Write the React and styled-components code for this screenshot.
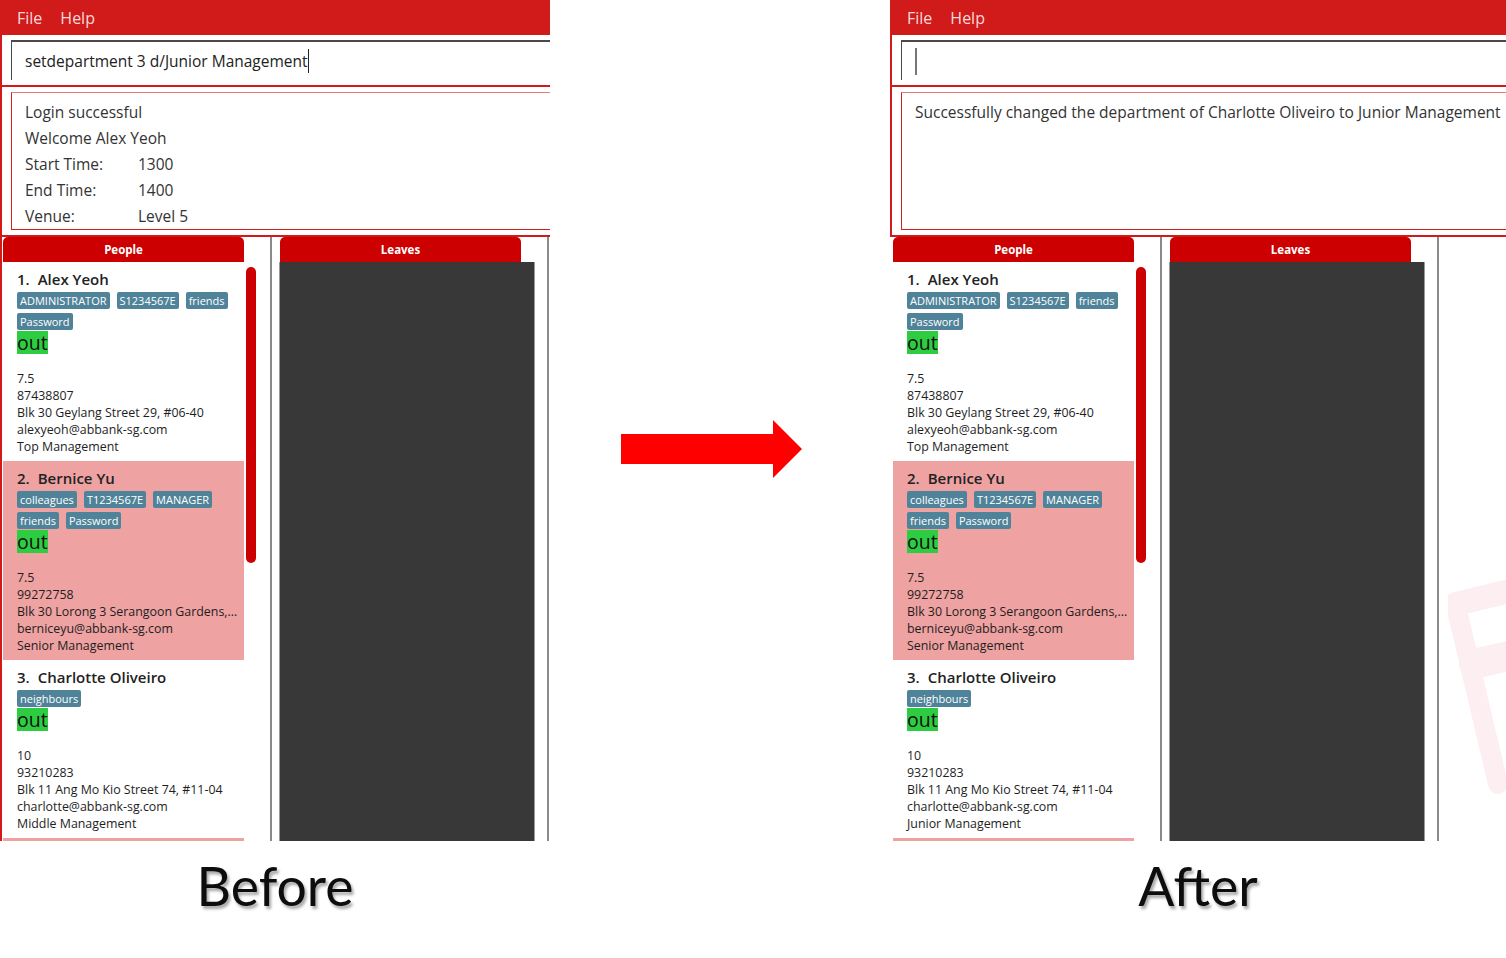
import React from "react";
import styled, { createGlobalStyle } from "styled-components";

const GlobalStyle = createGlobalStyle`
  * { box-sizing: border-box; }
  html, body { margin: 0; padding: 0; background: #ffffff; }
  body { font-family: "Open Sans", "Liberation Sans", sans-serif; }
`;

const RED = "#d11a1a";
const HEADER_RED = "#cc0000";

const Page = styled.div`
  width: 1506px;
  height: 958px;
  display: flex;
  overflow: hidden;
  background: #fff;
`;

const Column = styled.div`
  width: ${(p) => p.width}px;
  flex-shrink: 0;
  display: flex;
  flex-direction: column;
`;

const Screen = styled.div`
  position: relative;
  height: 841px;
  flex-shrink: 0;
  overflow: hidden;
  display: flex;
  flex-direction: column;
`;

const MenuBar = styled.div`
  height: 35px;
  flex-shrink: 0;
  background: ${RED};
  display: flex;
  align-items: center;
  gap: 18px;
  padding-left: 17px;
`;

const MenuItem = styled.span`
  color: #f7dada;
  font-size: 16px;
`;

const TopSection = styled.div`
  flex-shrink: 0;
  border-left: 2px solid ${RED};
`;

const CommandArea = styled.div`
  height: 52px;
  padding: 5px 0 0 9px;
  border-bottom: 2px solid ${RED};
`;

const CommandField = styled.div`
  height: 40px;
  border-top: 2px solid #4a4a4a;
  border-left: 1px solid #4a4a4a;
  display: flex;
  align-items: center;
  padding-left: 13px;
  font-size: 15.5px;
  color: #222;
  white-space: nowrap;
`;

const Caret = styled.span`
  display: inline-block;
  width: ${(p) => (p.idle ? 2 : 1)}px;
  height: ${(p) => (p.idle ? 27 : 24)}px;
  background: ${(p) => (p.idle ? "#777" : "#222")};
`;

const ResultArea = styled.div`
  height: 150px;
  padding: 5px 0 0 9px;
  border-bottom: 2px solid ${RED};
`;

const ResultBox = styled.div`
  height: 138px;
  border: 1px solid #d62020;
  border-top-color: #e77a7a;
  border-right: none;
  padding: 6px 13px;
  font-size: 15.5px;
  line-height: 26px;
  color: #333;
  white-space: nowrap;
`;

const ResultRow = styled.div`
  display: flex;
`;

const ResultLabel = styled.span`
  width: 113px;
`;

const Panels = styled.div`
  flex: 1;
  display: flex;
  border-left: 2px solid ${(p) => (p.edge ? RED : "transparent")};
  padding-left: 1px;
  min-height: 0;
`;

const PeopleColumn = styled.div`
  width: 253px;
  display: flex;
  flex-direction: column;
  overflow: hidden;
`;

const PanelHeader = styled.div`
  width: 241px;
  height: 25px;
  flex-shrink: 0;
  margin-left: ${(p) => p.offset || 0}px;
  background: ${HEADER_RED};
  border-radius: 5px 5px 0 0;
  color: #fff;
  font-size: 11.5px;
  font-weight: 700;
  display: flex;
  align-items: center;
  justify-content: center;
`;

const ListRow = styled.div`
  display: flex;
  flex-shrink: 0;
  align-items: flex-start;
`;

const CardList = styled.div`
  width: 241px;
`;

const ScrollThumb = styled.div`
  width: 10px;
  height: 296px;
  margin: 5px 0 0 2px;
  border-radius: 5px;
  background: ${HEADER_RED};
`;

const Card = styled.div`
  background: ${(p) => (p.shaded ? "#eea2a2" : "#ffffff")};
  padding: 6px 10px 6px 14px;
  color: #1e1e1e;
`;

const NextCard = styled.div`
  height: 12px;
  background: #eea2a2;
`;

const NameLine = styled.div`
  font-size: 15px;
  font-weight: 600;
  line-height: 22px;
  color: #222;
  white-space: nowrap;
`;

const Index = styled.span`
  margin-right: 8px;
`;

const TagRow = styled.div`
  display: flex;
  gap: 7px;
  margin-top: ${(p) => (p.first ? 2 : 4)}px;
`;

const Tag = styled.span`
  height: 17px;
  padding: 0 3px;
  border-radius: 2px;
  background: #4f8399;
  color: #fff;
  font-size: 11px;
  line-height: 17px;
  white-space: nowrap;
`;

const Status = styled.div`
  width: max-content;
  margin-top: 1px;
  height: 23px;
  background: #2ecc40;
  color: #111;
  font-size: 19.5px;
  line-height: 23px;
`;

const Details = styled.div`
  margin-top: 16px;
  font-size: 12.4px;
  line-height: 17px;
  white-space: nowrap;
`;

const Divider = styled.div`
  width: 2px;
  flex-shrink: 0;
  margin-left: ${(p) => p.offset}px;
  background: #8a8a8a;
`;

const LeavesColumn = styled.div`
  width: 256px;
  flex-shrink: 0;
  margin-left: 7px;
  display: flex;
  flex-direction: column;
`;

const LeavesBody = styled.div`
  flex: 1;
  background: #383838;
  border-left: 1px solid #9a9a9a;
  border-right: 1px solid #9a9a9a;
`;

const Watermark = styled.svg`
  position: absolute;
  left: 558px;
  top: 572px;
`;

const Caption = styled.div`
  margin-top: 10px;
  text-align: center;
  font-family: Lato, "Liberation Sans", sans-serif;
  font-size: 53.5px;
  line-height: 68px;
  color: #0d0d0d;
  text-shadow: 2px 3px 3px rgba(0, 0, 0, 0.35);
`;

const ArrowSlot = styled.div`
  width: 340px;
  flex-shrink: 0;
  padding: 420px 0 0 71px;
`;

const people = (department) => [
  {
    name: "Alex Yeoh",
    tags: [["ADMINISTRATOR", "S1234567E", "friends"], ["Password"]],
    details: [
      "7.5",
      "87438807",
      "Blk 30 Geylang Street 29, #06-40",
      "alexyeoh@abbank-sg.com",
      "Top Management",
    ],
  },
  {
    name: "Bernice Yu",
    tags: [["colleagues", "T1234567E", "MANAGER"], ["friends", "Password"]],
    details: [
      "7.5",
      "99272758",
      "Blk 30 Lorong 3 Serangoon Gardens,...",
      "berniceyu@abbank-sg.com",
      "Senior Management",
    ],
  },
  {
    name: "Charlotte Oliveiro",
    tags: [["neighbours"]],
    details: [
      "10",
      "93210283",
      "Blk 11 Ang Mo Kio Street 74, #11-04",
      "charlotte@abbank-sg.com",
      department,
    ],
  },
];

function PersonCard({ index, person }) {
  return (
    <Card shaded={index % 2 === 0}>
      <NameLine>
        <Index>{index}.</Index>
        {person.name}
      </NameLine>
      {person.tags.map((row, i) => (
        <TagRow key={i} first={i === 0}>
          {row.map((tag) => (
            <Tag key={tag}>{tag}</Tag>
          ))}
        </TagRow>
      ))}
      <Status>out</Status>
      <Details>
        {person.details.map((line, i) => (
          <div key={i}>{line}</div>
        ))}
      </Details>
    </Card>
  );
}

function AppWindow({ command, result, department, edge, watermark }) {
  return (
    <Screen>
      <MenuBar>
        <MenuItem>File</MenuItem>
        <MenuItem>Help</MenuItem>
      </MenuBar>
      <TopSection>
        <CommandArea>
          <CommandField>
            {command}
            <Caret idle={!command} />
          </CommandField>
        </CommandArea>
        <ResultArea>
          <ResultBox>{result}</ResultBox>
        </ResultArea>
      </TopSection>
      <Panels edge={edge}>
        <PeopleColumn>
          <PanelHeader>People</PanelHeader>
          <ListRow>
            <CardList>
              {people(department).map((p, i) => (
                <PersonCard key={p.name} index={i + 1} person={p} />
              ))}
              <NextCard />
            </CardList>
            <ScrollThumb />
          </ListRow>
        </PeopleColumn>
        <Divider offset={14} />
        <LeavesColumn>
          <PanelHeader offset={1}>Leaves</PanelHeader>
          <LeavesBody />
        </LeavesColumn>
        <Divider offset={12} />
      </Panels>
      {watermark && (
        <Watermark width="70" height="240" viewBox="0 0 70 240">
          <g stroke="#fdeff1" strokeLinecap="round" fill="none">
            <line x1="8" y1="32" x2="70" y2="17" strokeWidth="24" />
            <line x1="8" y1="34" x2="50" y2="212" strokeWidth="20" />
            <line x1="26" y1="92" x2="70" y2="82" strokeWidth="30" />
          </g>
        </Watermark>
      )}
    </Screen>
  );
}

const loginResult = (
  <>
    <div>Login successful</div>
    <div>Welcome Alex Yeoh</div>
    <ResultRow>
      <ResultLabel>Start Time:</ResultLabel>1300
    </ResultRow>
    <ResultRow>
      <ResultLabel>End Time:</ResultLabel>1400
    </ResultRow>
    <ResultRow>
      <ResultLabel>Venue:</ResultLabel>Level 5
    </ResultRow>
  </>
);

export default function App() {
  return (
    <Page>
      <GlobalStyle />
      <Column width={550}>
        <AppWindow
          command="setdepartment 3 d/Junior Management"
          result={loginResult}
          department="Middle Management"
          edge
        />
        <Caption>Before</Caption>
      </Column>
      <ArrowSlot>
        <svg width="181" height="58" viewBox="0 0 181 58">
          <polygon
            points="0,14 152,14 152,0 181,29 152,58 152,44 0,44"
            fill="#ff0000"
          />
        </svg>
      </ArrowSlot>
      <Column width={616}>
        <AppWindow
          command=""
          result="Successfully changed the department of Charlotte Oliveiro to Junior Management"
          department="Junior Management"
          watermark
        />
        <Caption>After</Caption>
      </Column>
    </Page>
  );
}
